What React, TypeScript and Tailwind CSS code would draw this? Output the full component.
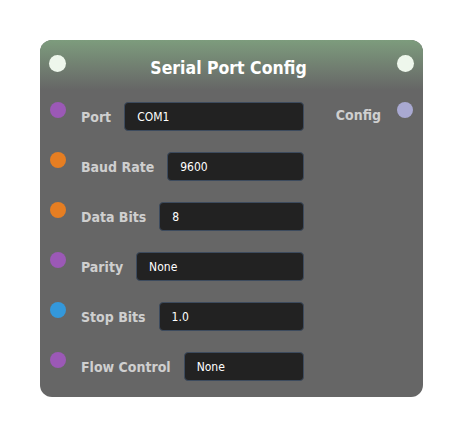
import React from "react";

const rows = [
  { label: "Port", value: "COM1", color: "bg-[#9b59b6]" },
  { label: "Baud Rate", value: "9600", color: "bg-[#e67e22]" },
  { label: "Data Bits", value: "8", color: "bg-[#e67e22]" },
  { label: "Parity", value: "None", color: "bg-[#9b59b6]" },
  { label: "Stop Bits", value: "1.0", color: "bg-[#3498db]" },
  { label: "Flow Control", value: "None", color: "bg-[#9b59b6]" },
];

export default function App() {
  return (
    <div
      className="w-[463px] h-[438px] bg-white pt-[40px] pl-[40px]"
      style={{ fontFamily: '"DejaVu Sans Condensed", "DejaVu Sans", sans-serif' }}
    >
      <div className="w-[383px] h-[357px] rounded-[12px] bg-[#666666] overflow-hidden flex flex-col">
        <div className="h-[50px] bg-gradient-to-b from-[#7d9c7d] to-[#666666] flex items-start justify-between px-[9px] pt-[15px]">
          <div className="w-[17px] h-[17px] rounded-full bg-[#eef7ec]" />
          <div className="text-white font-bold text-[17.5px] leading-none mt-[5px] mr-[6px]">Serial Port Config</div>
          <div className="w-[17px] h-[17px] rounded-full bg-[#eef7ec]" />
        </div>
        <div className="flex flex-col gap-[21px] pt-[12px] pl-[10px] pr-[10px]">
          {rows.map((r, i) => (
            <div key={r.label} className="flex items-start">
              <div className="w-[254px] flex items-start">
                <div className={`w-[16px] h-[16px] rounded-full ${r.color} shrink-0`} />
                <div className="flex items-center flex-1 ml-[15px] gap-[13px] h-[29px]">
                  <span className="text-[#cfcfcf] font-bold text-[14px] whitespace-nowrap pt-[1px]">{r.label}</span>
                  <div className="flex-1 h-[29px] bg-[#222222] border border-[#3d4b5e] rounded-[4px] flex items-center pl-[12px] text-white text-[12px]">
                    {r.value}
                  </div>
                </div>
              </div>
              {i === 0 && (
                <div className="flex-1 flex items-start justify-end">
                  <span className="text-[#cfcfcf] font-bold text-[14px] mr-[16px] leading-none mt-[6px]">Config</span>
                  <div className="w-[16px] h-[16px] rounded-full bg-[#a9a9d2]" />
                </div>
              )}
            </div>
          ))}
        </div>
      </div>
    </div>
  );
}
